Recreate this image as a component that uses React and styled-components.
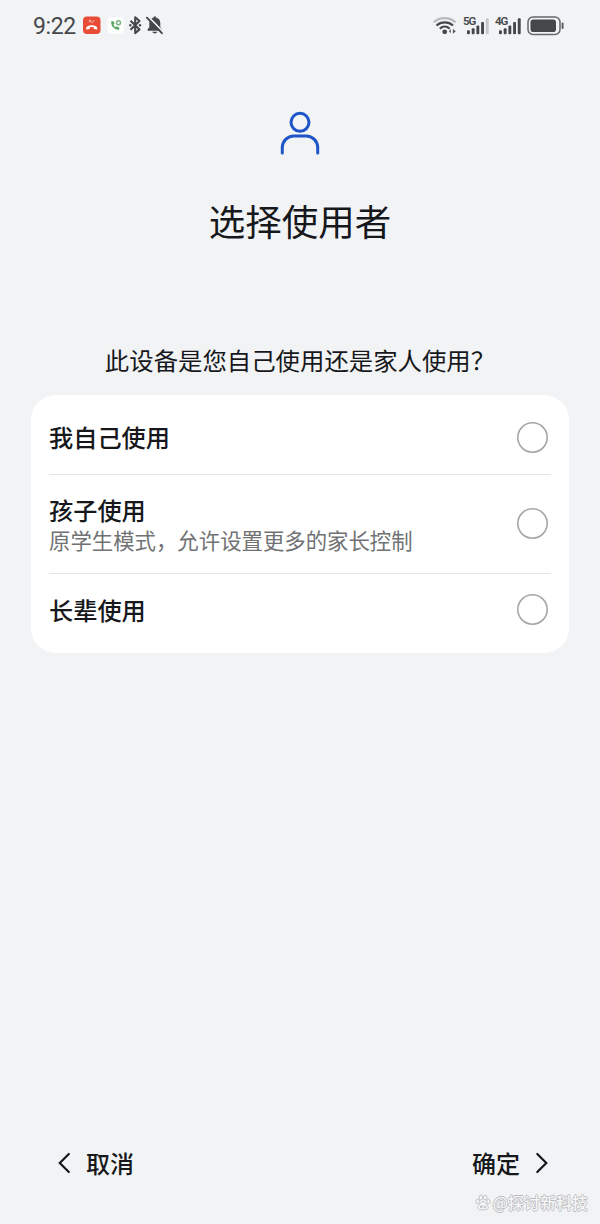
import { useState } from 'react';
import styled, { createGlobalStyle } from 'styled-components';

const GlobalStyle = createGlobalStyle`
  body {
    margin: 0;
    background-color: #f2f3f5;
    font-family: 'Noto Sans CJK SC', sans-serif;
    color: #16181b;
  }
`;

const Screen = styled.div`
  position: relative;
  display: flex;
  flex-direction: column;
  height: 1224px;
  overflow: hidden;
`;

const StatusBar = styled.header`
  display: flex;
  justify-content: space-between;
  align-items: center;
  height: 50px;
  padding: 0 35px 0 33px;
`;

const StatusGroup = styled.div`
  display: flex;
  align-items: center;
`;

const Clock = styled.span`
  width: 50px;
  font-family: Roboto, sans-serif;
  font-size: 23px;
  line-height: 27px;
  letter-spacing: -0.4px;
  color: #45474a;
  padding-top: 2px;
`;

const Header = styled.section`
  display: flex;
  flex-direction: column;
  align-items: center;
  height: 291px;
  padding-top: 60px;
  box-sizing: border-box;
`;

const Title = styled.h1`
  margin: 40px 0 0 0;
  font-size: 36.5px;
  line-height: 50px;
  font-weight: 400;
`;

const Question = styled.p`
  margin: 0;
  font-size: 24.4px;
  line-height: 38px;
  text-align: center;
`;

const Card = styled.div`
  display: flex;
  flex-direction: column;
  height: 258px;
  margin: 16px 31px 0 31px;
  padding: 0 18px;
  box-sizing: border-box;
  border-radius: 25px;
  background-color: #fff;
`;

const Option = styled.button`
  display: flex;
  justify-content: space-between;
  align-items: center;
  height: ${(props) => props.$height}px;
  padding: ${(props) => props.$padding};
  box-sizing: border-box;
  border: none;
  border-bottom: ${(props) => (props.$isLast ? 'none' : '1px solid #e3e4e6')};
  background: none;
  color: inherit;
  font-family: inherit;
  text-align: left;
`;

const OptionText = styled.div`
  display: flex;
  flex-direction: column;
`;

const Name = styled.span`
  font-size: 24.2px;
  line-height: 32px;
  font-weight: 500;
`;

const Description = styled.span`
  font-size: 21.4px;
  line-height: 28px;
  color: #707274;
`;

const Radio = styled.span`
  width: 31px;
  height: 31px;
  box-sizing: border-box;
  border-radius: 50%;
  box-shadow: inset 0 0 0 1.6px #a6a6a7;
  background-color: ${(props) => (props.$isChecked ? '#1b58d0' : 'transparent')};
`;

const Footer = styled.footer`
  display: flex;
  justify-content: space-between;
  margin-top: auto;
  padding: 0 51px 42px 57px;
`;

const FooterButton = styled.button`
  display: flex;
  align-items: center;
  gap: 14px;
  padding: 0;
  border: none;
  background: none;
  color: inherit;
  font-family: inherit;
  font-size: 24px;
  line-height: 38px;
  font-weight: 500;
`;

const Watermark = styled.div`
  position: absolute;
  right: 12px;
  bottom: 10px;
  display: flex;
  align-items: center;
  gap: 1px;
  font-size: 16px;
  line-height: 24px;
  font-weight: 500;
  color: #f5f6f7;
  text-shadow:
    0.8px 0 0.5px #b9bbbd,
    -0.8px 0 0.5px #b9bbbd,
    0 0.8px 0.5px #b9bbbd,
    0 -0.8px 0.5px #b9bbbd;
`;

const options = [
  { id: 'self', name: '我自己使用', height: 80, padding: '5px 3px 0 0' },
  {
    id: 'child',
    name: '孩子使用',
    description: '原学生模式，允许设置更多的家长控制',
    height: 99,
    padding: '0 3px 1px 0',
  },
  { id: 'elder', name: '长辈使用', height: 79, padding: '0 3px 8px 0' },
];

function NotificationIcons() {
  return (
    <svg width='82' height='24' viewBox='0 0 82 24'>
      <rect x='0' y='3.5' width='17.5' height='17.5' rx='4' fill='#e94c36' />
      <path
        d='M3.2 15.4c0-4.2 11.1-4.2 11.1 0v1.1l-3.5-.6v-1.7a8 8 0 0 0-4.1 0v1.7l-3.5.6Z'
        fill='#fff'
      />
      <path
        d='m6.300 7.400 2.500 2.200 2.800-2.300M6.300 9.300V7.400h1.900'
        fill='none'
        stroke='#ffc4ba'
        strokeWidth='0.9'
      />
      <rect x='24.5' y='4' width='16.5' height='16.5' rx='4' fill='#fcfffc' />
      <path
        d='M28.1 8.600c0 5 2.900 7.800 7.300 8.300l1.300-2-2.700-1.600-1.300 1c-1-.5-1.800-1.400-2.200-2.500l1.100-1.100-1.100-2.700Z'
        fill='#5da768'
      />
      <circle cx='35.5' cy='9.8' r='2' fill='none' stroke='#75b47d' strokeWidth='1.4' />
      <path
        d='m47.500 7.700 9 8.700-4.300 3.700V4.200l4.300 3.800-9 8.700'
        fill='none'
        stroke='#45474a'
        strokeWidth='2.1'
        strokeLinejoin='round'
      />
      <circle cx='47.3' cy='12.3' r='1.2' fill='#45474a' />
      <circle cx='57' cy='12.3' r='1.2' fill='#45474a' />
      <path
        d='M64.600 17.800v-1.500l1.700-2V10c0-2.900 1.900-4.900 4.400-5.400V3.600h2.200v1c2.700.5 4.400 2.500 4.400 5.400v4.300l1.700 2v1.500Z'
        fill='#45474a'
      />
      <path d='M69.300 18.800h5c-.5 2.200-4.400 2.200-5 0Z' fill='#45474a' />
      <path d='m65 3.400 15.200 15.400' stroke='#f2f3f5' strokeWidth='1.7' />
      <path d='m63.900 4.700 15 15.500' stroke='#45474a' strokeWidth='1.9' strokeLinecap='round' />
    </svg>
  );
}

function WifiIcon() {
  return (
    <svg width='24' height='20' viewBox='0 0 24 20' fill='none' strokeWidth='2.2'>
      <path d='M.8 6.3c6-5.5 15.700-5.500 21.700 0' stroke='#b7b9bb' />
      <path d='M3.500 9.500c4.500-4.200 12-4.200 16.500 0' stroke='#45474a' />
      <path d='M6.800 12.700c2.900-2.700 7-2.700 9.900 0' stroke='#45474a' />
      <circle cx='11.700' cy='15.800' r='2.400' fill='#45474a' />
      <path d='m17.900 13.300-2 2 2 2Zm2 -.4 2.900 2.400-2.900 2.400Z' fill='#55575a' />
    </svg>
  );
}

const SignalBox = styled.div`
  display: flex;
  position: relative;
  width: 26px;
  height: 20px;
`;

const SignalLabel = styled.span`
  position: absolute;
  left: 0;
  top: 0;
  font-family: Roboto, sans-serif;
  font-size: 11.5px;
  line-height: 10px;
  font-weight: 600;
  letter-spacing: -1.1px;
  color: #45474a;
`;

const bars = [
  { x: 4, y: 14.3 },
  { x: 8.7, y: 12.3 },
  { x: 13.4, y: 9.5 },
  { x: 18.1, y: 6 },
  { x: 22.8, y: 2.3 },
];

function Signal({ label, strength }) {
  return (
    <SignalBox>
      <svg width='26' height='20' viewBox='0 0 26 20'>
        {bars.map((bar, index) => (
          <rect
            key={bar.x}
            x={bar.x}
            y={bar.y}
            width='2.9'
            height={18.2 - bar.y}
            rx='1'
            fill={index < strength ? '#45474a' : '#c6c8ca'}
          />
        ))}
      </svg>
      <SignalLabel>{label}</SignalLabel>
    </SignalBox>
  );
}

const Indicators = styled(StatusGroup)`
  gap: 6px;
  padding-top: 1px;
`;

function BatteryIcon() {
  return (
    <svg width='38' height='20' viewBox='0 0 38 20'>
      <rect x='1' y='1' width='32' height='17.5' rx='5' fill='none' stroke='#65676a' strokeWidth='1.5' />
      <rect x='3.5' y='3.5' width='25.5' height='12.5' rx='2.8' fill='#45474a' />
      <path d='M35.6 7.500v4.500' stroke='#55575a' strokeWidth='1.9' strokeLinecap='round' />
    </svg>
  );
}

function UserIcon() {
  return (
    <svg width='42' height='46' viewBox='0 0 42 46' fill='none' stroke='#1d55c8' strokeWidth='3'>
      <circle cx='21' cy='12.3' r='9' />
      <path d='M3.3 43V37.500a11.500 11.500 0 0 1 11.500-11.500h12.400a11.500 11.500 0 0 1 11.500 11.500V43' strokeLinecap='round' />
    </svg>
  );
}

function Chevron({ isRight }) {
  return (
    <svg width='15' height='22' viewBox='0 0 15 22' fill='none' stroke='#16181b' strokeWidth='2.2'>
      <path d={isRight ? 'm3.300 2 9 9-9 9' : 'M11.800 2 2.800 11l9 9'} strokeLinecap='round' />
    </svg>
  );
}

function PawIcon() {
  return (
    <svg width='16' height='17' viewBox='0 0 16 17' fill='#f7f8f9' stroke='#b9bbbd' strokeWidth='0.9'>
      <ellipse cx='2.7' cy='7.5' rx='1.7' ry='2.3' />
      <ellipse cx='5.9' cy='3.5' rx='1.7' ry='2.5' />
      <ellipse cx='10.2' cy='3.5' rx='1.7' ry='2.5' />
      <ellipse cx='13.4' cy='7.5' rx='1.7' ry='2.3' />
      <path d='M8 7.5c-2 0-2.5 2.1-4.2 3.7-2.1 2-.8 4.7 1.5 4.7 1 0 1.7-.3 2.7-.3s1.7.3 2.7.3c2.3 0 3.6-2.7 1.5-4.7C10.5 9.6 10 7.5 8 7.5Z' />
      <path d='M7 11v2.700H5.500V12H7M9 11.500v2.200h1.800v-2.200' />
    </svg>
  );
}

function App() {
  const [selected, setSelected] = useState(null);

  return (
    <>
      <GlobalStyle />
      <Screen>
        <StatusBar>
          <StatusGroup>
            <Clock>9:22</Clock>
            <NotificationIcons />
          </StatusGroup>
          <Indicators>
            <WifiIcon />
            <Signal label='5G' strength={4} />
            <Signal label='4G' strength={5} />
            <BatteryIcon />
          </Indicators>
        </StatusBar>
        <Header>
          <UserIcon />
          <Title>选择使用者</Title>
        </Header>
        <Question>此设备是您自己使用还是家人使用？</Question>
        <Card>
          {options.map((option, index) => (
            <Option
              key={option.id}
              $height={option.height}
              $padding={option.padding}
              $isLast={index === options.length - 1}
              onClick={() => setSelected(option.id)}
            >
              <OptionText>
                <Name>{option.name}</Name>
                {option.description && (
                  <Description>{option.description}</Description>
                )}
              </OptionText>
              <Radio $isChecked={selected === option.id} />
            </Option>
          ))}
        </Card>
        <Footer>
          <FooterButton>
            <Chevron />
            取消
          </FooterButton>
          <FooterButton>
            确定
            <Chevron isRight />
          </FooterButton>
        </Footer>
        <Watermark>
          <PawIcon />
          @探讨新科技
        </Watermark>
      </Screen>
    </>
  );
}

export default App;
